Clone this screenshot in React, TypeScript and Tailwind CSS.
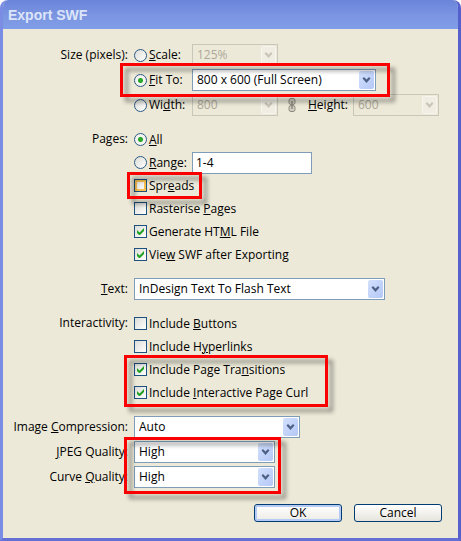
import { useState } from "react";
import type { ReactNode } from "react";

interface SelectBoxProps {
  id: string;
  options: string[];
  width: string;
  disabled?: boolean;
  label?: string;
}

function SelectBox({ id, options, width, disabled, label }: SelectBoxProps) {
  return (
    <div className={`relative h-[22px] ${width}`}>
      <select
        id={id}
        disabled={disabled}
        aria-label={label}
        className="block h-full w-full appearance-none border border-[#7f9db9] bg-white pl-1 pr-5 text-black disabled:border-[#c9c7ba] disabled:bg-[#ece9d8] disabled:text-[#aca899] disabled:opacity-100"
      >
        {options.map((o) => (
          <option key={o}>{o}</option>
        ))}
      </select>
      <span
        className={`pointer-events-none absolute inset-y-0.5 right-0.5 flex w-[15px] items-center justify-center rounded-xs ${
          disabled ? "border border-[#f7f5ee] bg-[#f0eee3] text-[#c9c6b8]" : "bg-gradient-to-br from-[#d3e0fd] to-[#b4c8f6] text-[#4d6185]"
        }`}
      >
        <svg className="shrink-0" width="9" height="7" viewBox="0 0 9 7" fill="currentColor">
          <path d="M0.500 1.500L2 0l2.500 2.500L7 0l1.500 1.500-4 4.500z" />
        </svg>
      </span>
    </div>
  );
}

interface RadioProps {
  name: string;
  value: string;
  current: string;
  onChange: (value: string) => void;
  children: ReactNode;
}

function Radio({ name, value, current, onChange, children }: RadioProps) {
  return (
    <label className="flex w-[58px] shrink-0 items-center gap-0.5 whitespace-nowrap">
      <input
        type="radio"
        name={name}
        checked={current === value}
        onChange={() => onChange(value)}
        className="size-[13px] shrink-0 appearance-none rounded-full border border-[#2d5a87] bg-gradient-to-br from-[#dcdcd7] to-white checked:bg-[radial-gradient(circle,#2fb52f_0,#21a121_2px,#f4f4f0_3px)]"
      />
      <span>{children}</span>
    </label>
  );
}

interface CheckProps {
  defaultChecked?: boolean;
  hot?: boolean;
  children: ReactNode;
}

function Check({ defaultChecked, hot, children }: CheckProps) {
  return (
    <label className="flex h-[23px] w-fit items-center gap-0.5 whitespace-nowrap">
      <span className="relative size-[13px] shrink-0">
        <input
          type="checkbox"
          defaultChecked={defaultChecked}
          className={`peer block size-[13px] appearance-none border border-[#1c5180] bg-gradient-to-br from-[#dcdcd7] to-white ${
            hot ? "shadow-[inset_0_0_0_2px_#f9c04f]" : ""
          }`}
        />
        <svg
          className="pointer-events-none absolute inset-0 hidden peer-checked:block"
          viewBox="0 0 13 13"
          fill="#21a121"
        >
          <path d="M3 5v3l2 2h1l4-4V3L5.500 7.500z" />
        </svg>
      </span>
      <span>{children}</span>
    </label>
  );
}

// red frame drawn around a group of controls
function Highlight({ className }: { className: string }) {
  return (
    <div
      className={`pointer-events-none absolute z-10 border-3 border-[#fb0000] drop-shadow-[5px_5px_2px_rgba(0,0,0,0.4)] ${className}`}
    />
  );
}

function Row({ label, children }: { label: ReactNode; children: ReactNode }) {
  return (
    <div className="flex gap-1.5">
      <div className="h-[22px] w-[125px] shrink-0 whitespace-nowrap text-right leading-[22px]">{label}</div>
      <div className="min-w-0">{children}</div>
    </div>
  );
}

export default function App() {
  const [size, setSize] = useState("fit");
  const [pages, setPages] = useState("all");

  return (
    <div className="min-h-screen bg-white">
      <div className="flex min-h-screen flex-col overflow-hidden rounded-t-lg border-x-3 border-b-3 border-b-[#6570d6] border-l-[#7b8ce4] border-r-[#5560cc] bg-[#ece9d8] font-['Open_Sans','Noto_Sans',sans-serif] text-xs text-black">
        <header className="-mx-[3px] flex h-[29px] items-center rounded-t-lg bg-gradient-to-b from-[#6a84da] via-[#7b94e1] to-[#809ee8] pl-2">
          <h1 className="font-['Liberation_Sans',sans-serif] text-sm font-bold text-[#dce5f8]">Export SWF</h1>
        </header>

        <form className="flex flex-col gap-3 pb-4 pt-[15px]" onSubmit={(e) => e.preventDefault()}>
          {/* Size */}
          <Row label="Size (pixels):">
            <div className="flex flex-col gap-[3px]">
              <div className="flex">
                <Radio name="size" value="scale" current={size} onChange={setSize}><u>S</u>cale:</Radio>
                <SelectBox id="scale" label="Scale" options={["125%"]} width="w-[86px]" disabled />
              </div>
              <div className="relative flex w-fit">
                <Radio name="size" value="fit" current={size} onChange={setSize}><u>F</u>it To:</Radio>
                <SelectBox id="fit" label="Fit To" options={["800 x 600 (Full Screen)"]} width="w-[184px]" />
                <Highlight className="-inset-y-1.5 -left-3.5 -right-3.5" />
              </div>
              <div className="flex items-center">
                <Radio name="size" value="width" current={size} onChange={setSize}>Wi<u>d</u>th:</Radio>
                <SelectBox id="width" label="Width" options={["800"]} width="w-[86px]" disabled />
                <svg className="ml-2.5 mr-3 shrink-0" width="8" height="14" viewBox="0 0 8 14" fill="none" stroke="#8b897d">
                  <rect x="1" y="0.500" width="6" height="6" rx="2" fill="#d2cfc2" />
                  <rect x="1" y="7.500" width="6" height="6" rx="2" fill="#d2cfc2" />
                  <path d="M4 3v8" strokeWidth="1.500" />
                </svg>
                <label htmlFor="height" className="w-[45px] shrink-0"><u>H</u>eight:</label>
                <SelectBox id="height" options={["600"]} width="w-[86px]" disabled />
              </div>
            </div>
          </Row>

          {/* Pages */}
          <Row label="Pages:">
            <div className="flex h-[23px] items-center">
              <Radio name="pages" value="all" current={pages} onChange={setPages}><u>A</u>ll</Radio>
            </div>
            <div className="flex h-[23px] items-center">
              <Radio name="pages" value="range" current={pages} onChange={setPages}><u>R</u>ange:</Radio>
              <input type="text" aria-label="Range" defaultValue="1-4" className="h-[22px] w-[120px] border border-[#7f9db9] bg-white px-[3px]" />
            </div>
            <div className="relative w-fit">
              <Check hot>Spr<u>e</u>ads</Check>
              <Highlight className="-inset-y-0.5 -left-[7px] -right-2" />
            </div>
            <Check>Rasterise <u>P</u>ages</Check>
            <Check defaultChecked>Generate HT<u>M</u>L File</Check>
            <Check defaultChecked>Vie<u>w</u> SWF after Exporting</Check>
          </Row>

          <Row label={<label htmlFor="text"><u>T</u>ext:</label>}>
            <SelectBox id="text" options={["InDesign Text To Flash Text"]} width="w-[251px]" />
          </Row>

          {/* Interactivity */}
          <Row label="Interactivity:">
            <Check>Include <u>B</u>uttons</Check>
            <Check>Include H<u>y</u>perlinks</Check>
            <div className="relative w-fit">
              <Check defaultChecked>Include Page Tra<u>n</u>sitions</Check>
              <Check defaultChecked>Include <u>I</u>nteractive Page Curl</Check>
              <Highlight className="-bottom-[3px] -left-2.5 -right-5 -top-[3px]" />
            </div>
          </Row>

          {/* Compression */}
          <div className="flex flex-col gap-[3px]">
            <Row label={<label htmlFor="compression">Image <u>C</u>ompression:</label>}>
              <SelectBox id="compression" options={["Auto"]} width="w-[166px]" />
            </Row>
            <div className="relative flex w-fit flex-col gap-[3px]">
              <Row label={<label htmlFor="jpeg"><u>J</u>PEG Quality:</label>}>
                <SelectBox id="jpeg" options={["High"]} width="w-[141px]" />
              </Row>
              <Row label={<label htmlFor="curve">Curve <u>Q</u>uality:</label>}>
                <SelectBox id="curve" options={["High"]} width="w-[141px]" />
              </Row>
              <Highlight className="-bottom-1.5 -right-1.5 -top-1 left-[121px]" />
            </div>
          </div>

          <div className="mt-1 flex justify-end gap-3 pr-4">
            <button
              type="submit"
              className="h-[18px] w-[88px] rounded-[3px] border border-[#003c74] bg-gradient-to-b from-white to-[#ecebe5] leading-4 shadow-[inset_0_0_0_2px_#b5cbf5]"
            >
              OK
            </button>
            <button
              type="button"
              className="h-[18px] w-[88px] rounded-[3px] border border-[#003c74] bg-gradient-to-b from-white to-[#e6e4dc] leading-4"
            >
              Cancel
            </button>
          </div>
        </form>
      </div>
    </div>
  );
}
